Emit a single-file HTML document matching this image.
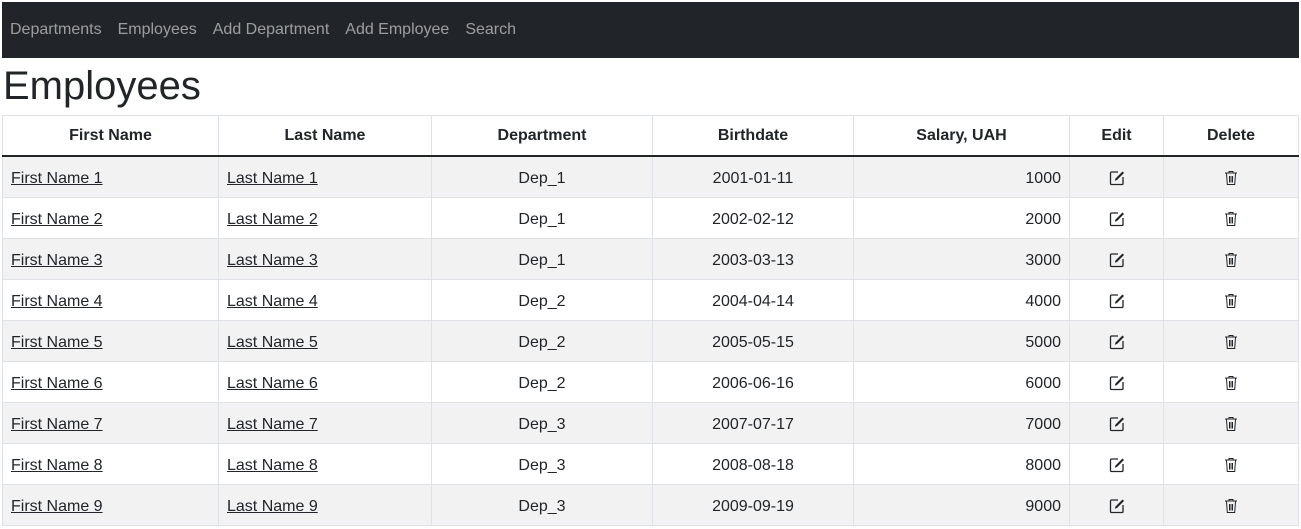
<!DOCTYPE html>
<html><head><meta charset="utf-8"><style>
body{margin:2px;font-family:"Liberation Sans",sans-serif;color:#212529;font-size:16px;background:#fff}
nav{background:#212529;height:56px;display:flex;align-items:center;padding-left:8px}
nav a{color:rgba(255,255,255,.55);text-decoration:none;font-size:16px;margin-right:16px}
h1{font-size:40px;font-weight:500;margin:0;height:57px;line-height:56px;padding-left:1px}
table{border-collapse:collapse;width:1296px;table-layout:fixed}
th,td{border:1px solid #dee2e6;height:40px;padding:0 8px}
td{padding-top:3px;height:37px}
th{font-weight:bold;text-align:center;border-bottom:2px solid #212529;height:39px}
tbody tr:nth-child(odd){background:#f2f2f2}
td a{color:#212529}
.c{text-align:center}.r{text-align:right}
svg{vertical-align:middle}
</style></head><body>
<nav><a>Departments</a><a>Employees</a><a>Add Department</a><a>Add Employee</a><a>Search</a></nav>
<h1>Employees</h1>
<table><colgroup><col style="width:216px"><col style="width:213px"><col style="width:221px"><col style="width:201px"><col style="width:216px"><col style="width:94px"><col style="width:135px"></colgroup>
<thead><tr><th>First Name</th><th>Last Name</th><th>Department</th><th>Birthdate</th><th>Salary, UAH</th><th>Edit</th><th>Delete</th></tr></thead>
<tbody id="b"></tbody></table>
<script>
var e='<svg width="16" height="16" viewBox="0 0 16 16"><path d="M9 2H2.5a1 1 0 0 0-1 1v10.5a1 1 0 0 0 1 1H13a1 1 0 0 0 1-1V7" fill="none" stroke="#212529" stroke-width="1.3"/><path d="M13.5 1.5l1.5 1.5-7 7-2.2.7.7-2.2z" fill="#212529"/></svg>';
var d='<svg width="14" height="16" viewBox="0 0 14 16"><path d="M1 3h12M5 3V1.5h4V3M2.5 3.5l.8 11h7.4l.8-11M5.5 6v6.5M7 6v6.5M8.5 6v6.5" fill="none" stroke="#212529" stroke-width="1"/></svg>';
var h='';for(var i=1;i<=9;i++){var dep='Dep_'+Math.ceil(i/3);h+='<tr><td><a href="#">First Name '+i+'</a></td><td><a href="#">Last Name '+i+'</a></td><td class="c">'+dep+'</td><td class="c">200'+i+'-0'+i+'-1'+i+'</td><td class="r">'+i+'000</td><td class="c">'+e+'</td><td class="c">'+d+'</td></tr>';}
document.getElementById('b').innerHTML=h;
</script>
</body></html>
